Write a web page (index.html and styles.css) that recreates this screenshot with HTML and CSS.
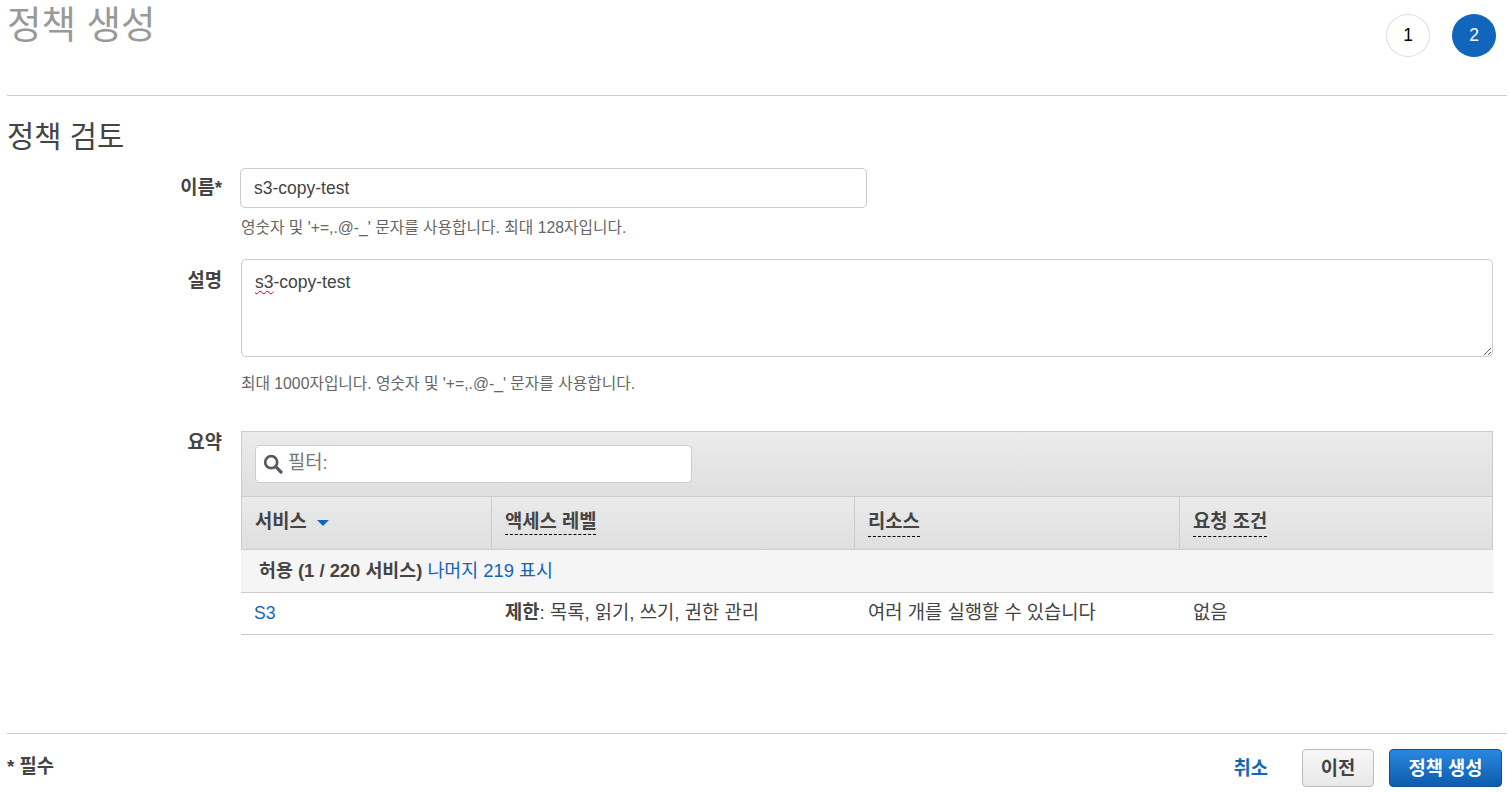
FILE: index.html
```html
<!DOCTYPE html>
<html lang="ko">
<head>
<meta charset="utf-8">
<title>정책 생성</title>
<link rel="stylesheet" href="styles.css">
</head>
<body>
<div class="page">
  <header class="top">
    <h1 class="title">정책 생성</h1>
    <ol class="steps">
      <li class="step">1</li>
      <li class="step step-active">2</li>
    </ol>
  </header>
  <main class="main">
    <h2 class="section">정책 검토</h2>
    <div class="row row-name">
      <label class="label">이름*</label>
      <div class="field">
        <input class="input" type="text" value="s3-copy-test" spellcheck="false">
        <p class="help">영숫자 및 '+=,.@-_' 문자를 사용합니다. 최대 128자입니다.</p>
      </div>
    </div>
    <div class="row row-desc">
      <label class="label">설명</label>
      <div class="field field-wide">
        <div class="textarea"><span class="typo">s3</span>-copy-test</div>
        <p class="help help-desc">최대 1000자입니다. 영숫자 및 '+=,.@-_' 문자를 사용합니다.</p>
      </div>
    </div>
    <div class="row row-summary">
      <label class="label">요약</label>
      <div class="summary">
        <div class="toolbar">
          <div class="filter">
            <svg class="search-icon" viewBox="0 0 20 20" width="20" height="20" aria-hidden="true">
              <circle cx="8.2" cy="8.2" r="6" fill="none" stroke="#545b64" stroke-width="2.7"/>
              <path d="M12.6 12.6L18 18" fill="none" stroke="#545b64" stroke-width="3.2" stroke-linecap="round"/>
            </svg>
            <span class="filter-text">필터:</span>
          </div>
        </div>
        <div class="grid head">
          <div class="th"><span>서비스</span><i class="caret"></i></div>
          <div class="th"><span class="dashed dashed-short">액세스 레벨</span></div>
          <div class="th"><span class="dashed">리소스</span></div>
          <div class="th"><span class="dashed">요청 조건</span></div>
        </div>
        <div class="group"><b>허용 (1 / 220 서비스)</b> <a class="link">나머지 219 표시</a></div>
        <div class="grid body-row">
          <div class="td"><a class="link link-latin">S3</a></div>
          <div class="td"><b>제한</b>: 목록, 읽기, 쓰기, 권한 관리</div>
          <div class="td">여러 개를 실행할 수 있습니다</div>
          <div class="td">없음</div>
        </div>
      </div>
    </div>
  </main>
  <footer class="foot">
    <div class="req">* 필수</div>
    <div class="actions">
      <a class="cancel">취소</a>
      <button class="btn btn-prev" type="button">이전</button>
      <button class="btn btn-primary" type="button">정책 생성</button>
    </div>
  </footer>
</div>
</body>
</html>
```
FILE: styles.css
```css
* { box-sizing: border-box; }
html, body { margin: 0; padding: 0; height: 792px; overflow: hidden; background: #fff; }
body {
  font-family: "Liberation Sans", "Noto Sans CJK KR", sans-serif;
  font-size: 17.5px;
  color: #444;
}
.page { height: 792px; display: flex; flex-direction: column; padding: 0 3px 0 7px; }

.top {
  height: 96px;
  border-bottom: 1px solid #ccc;
  display: flex;
  justify-content: space-between;
  align-items: flex-start;
  flex: none;
}
.title { margin: 0; padding-top: 1px; font-size: 37.5px; line-height: 48px; font-weight: 400; color: #999; }
.steps { display: flex; gap: 22px; list-style: none; margin: 14px 11px 0 0; padding: 0; }
.step {
  width: 44px; height: 43px; border-radius: 50%;
  border: 1px solid #ddd; color: #000; background: #fff;
  display: flex; align-items: center; justify-content: center;
  font-size: 17.5px;
}
.step-active { background: #1166bb; border-color: #1166bb; color: #fff; }

.main { flex: 1; min-height: 0; }
.section { margin: 0; padding-top: 21px; font-size: 29.6px; line-height: 40px; height: 72px; font-weight: 400; color: #444; }

.row { display: flex; }
.label { width: 215px; flex: none; text-align: right; font-weight: 700; font-size: 18.75px; line-height: 24px; color: #444; }
.field { margin-left: 18px; width: 627px; }
.field-wide { margin-left: 19px; width: 1252px; }
.row-name { height: 91px; }
.row-name .label { padding-top: 8px; }
.row-desc { height: 172px; }
.row-desc .label { padding-top: 10px; }
.row-summary .label { padding-top: 0; }

.input {
  display: block; width: 100%; height: 40px;
  border: 1px solid #ccc; border-radius: 5px;
  padding: 0 13px; font: inherit; font-size: 17.5px; color: #444; outline: none;
}
.help { margin: 10px 0 0 1px; font-size: 15.75px; line-height: 20px; color: #666; }
.help-desc { margin-top: 17px; margin-left: 0; }
.textarea {
  width: 100%; height: 98px; border: 1px solid #ccc; border-radius: 5px;
  padding: 10px 13px; font-size: 17.5px; line-height: 24px; color: #444;
  resize: vertical; overflow: auto;
}
.typo { text-decoration: underline wavy #e00000 1px; text-underline-offset: 2px; }

.summary { margin-left: 19px; width: 1252px; }
.toolbar {
  height: 66px; padding: 13px 13px 0;
  background: linear-gradient(#ebebeb, #dfdfdf);
  border: 1px solid #ccc; border-bottom: 1px solid #ccc;
}
.filter {
  width: 437px; height: 38px; background: #fff;
  border: 1px solid #ccc; border-radius: 5px;
  display: flex; align-items: center; padding-left: 7px; gap: 5px;
}
.search-icon { flex: none; }
.filter-text { color: #777; font-size: 18.75px; padding-bottom: 8px; }

.grid { display: grid; grid-template-columns: 249px 363px 325px 1fr; }
.head {
  height: 53px; background: linear-gradient(#ebebeb, #dfdfdf);
  border-left: 1px solid #ccc; border-right: 1px solid #ccc; border-bottom: 1px solid #ccc;
}
.th {
  font-weight: 700; font-size: 18.75px; padding: 13px 13px 0; line-height: 24px;
  border-left: 1px solid #ccc; color: #444;
  display: flex; align-items: flex-start;
}
.th:first-child { border-left: 0; }
.dashed { border-bottom: 1px dashed #000; height: 27px; }
.dashed-short { height: 25px; }
.caret {
  width: 0; height: 0; margin: 10px 0 0 10px;
  border-left: 6.5px solid transparent; border-right: 6.5px solid transparent; border-top: 6.5px solid #1166bb;
}
.group {
  height: 43px; background: #f5f5f5; border-bottom: 1px solid #ccc;
  padding: 8px 0 0 18px; font-size: 18.4px; line-height: 26px;
}
.group b { font-weight: 700; }
.link { color: #1166bb; text-decoration: none; }
.link-latin { font-size: 17.5px; }
.body-row { height: 42px; border-bottom: 1px solid #ccc; padding-left: 0; }
.td { padding: 7px 13px 0; font-size: 18.75px; line-height: 26px; white-space: nowrap; }
.td:nth-child(n+2) { padding-left: 15px; }
.td b { font-weight: 700; }

.foot {
  flex: none; height: 59px; border-top: 1px solid #ccc;
  display: flex; justify-content: space-between; align-items: flex-start;
}
.req { font-weight: 700; font-size: 18.75px; line-height: 24px; padding-top: 21px; color: #444; }
.actions { display: flex; align-items: center; margin: 15px 5px 0 0; }
.cancel { color: #1166bb; font-weight: 700; font-size: 18.75px; margin-right: 34px; padding-bottom: 3px; }
.btn {
  height: 38px; border-radius: 4px; font: inherit; font-weight: 700; font-size: 18.75px;
  padding: 0 0 3px; cursor: pointer;
}
.btn-prev {
  width: 72px; margin-right: 15px; color: #444;
  background: linear-gradient(#f7f7f7, #e8e8e8); border: 1px solid #bbb;
}
.btn-primary {
  width: 113px; color: #fff;
  background: linear-gradient(#2a87e0, #0d5cad); border: 1px solid #0b4f94;
}
```
